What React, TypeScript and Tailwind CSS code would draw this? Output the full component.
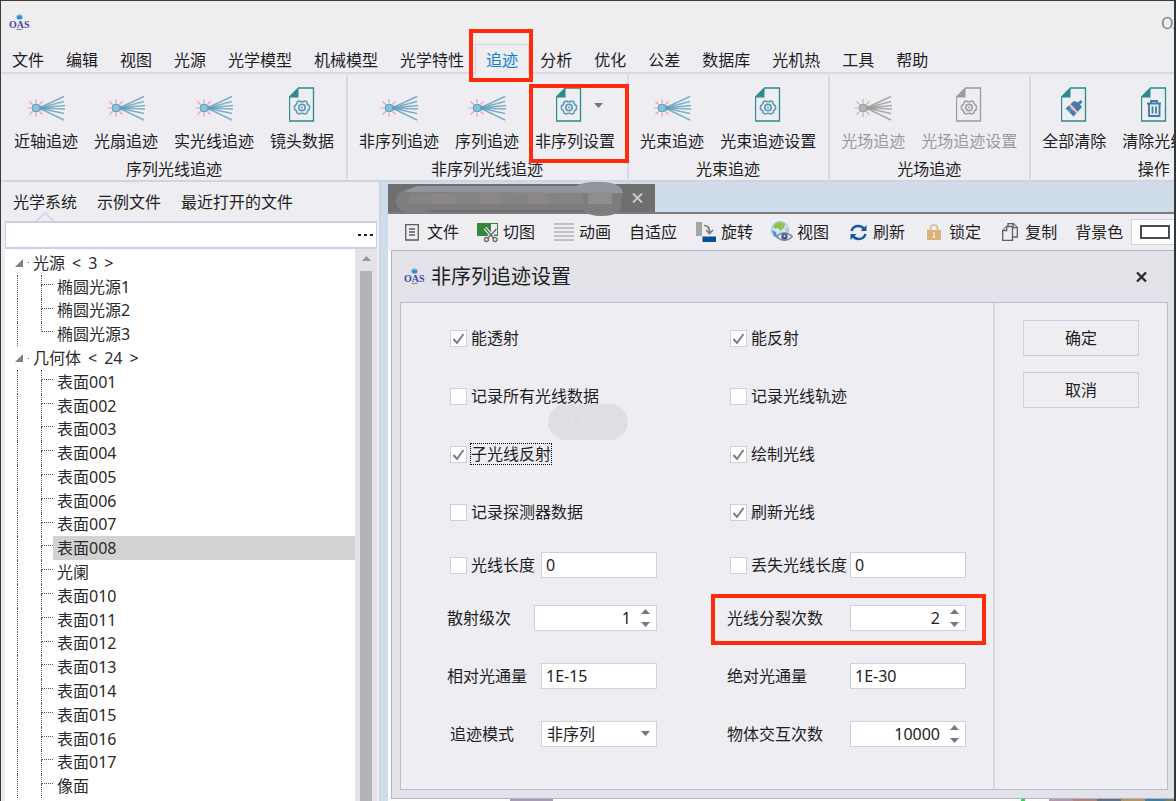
import { useState, type ReactNode } from 'react';

const menus = [
  '文件', '编辑', '视图', '光源', '光学模型', '机械模型', '光学特性', '追迹',
  '分析', '优化', '公差', '数据库', '光机热', '工具', '帮助',
];

const surfaces = [
  '表面001', '表面002', '表面003', '表面004', '表面005', '表面006', '表面007', '表面008', '光阑',
  '表面010', '表面011', '表面012', '表面013', '表面014', '表面015', '表面016', '表面017', '像面',
];

function OasLogo() {
  return (
    <svg className="h-[18px] w-[21px] shrink-0" viewBox="0 0 21 18" role="img" aria-label="OAS">
      <ellipse cx="10.5" cy="3" rx="3" ry="2.6" fill="#2f8fd0" />
      <path d="M8 2.2q2.5-2 5 0" stroke="#7fc4ea" strokeWidth="1" fill="none" />
      <path d="M7.5 15.5h6" stroke="#8d8d95" strokeWidth="1.2" />
      <text x="0" y="14" fontFamily="Liberation Serif, serif" fontWeight="700" fontSize="10" fill="#4a45a8">
        OAS
      </text>
    </svg>
  );
}

function RayIcon({ disabled = false }: { disabled?: boolean }) {
  const body = disabled ? '#b4b4b4' : '#86c1da';
  const edge = disabled ? '#9c9c9c' : '#5d9fbc';
  const spark = disabled ? '#b9b9b9' : '#f29cb0';
  const ray = disabled ? '#a9a9a9' : '#7fb0c6';
  return (
    <svg className="h-[36px] w-[40px]" viewBox="0 0 40 36" fill="none" aria-hidden>
      <path
        d="M10 12v4M10 26v4M1.500 21h4M3.500 14.500l3 3M3.500 27.500l3-3M16.500 14.500l-3 3M16.500 27.500l-3-3"
        stroke={spark}
        strokeWidth="1.2"
      />
      <path d="M13 21L38 9.500M13 21l25-6.500M13 21l26-2.500M13 21l26 1M13 21l25 5.500M13 21l25 12" stroke={ray} strokeWidth="1.500" />
      <path d="M12 18l11 3-11 3z" fill={edge} />
      <circle cx="10" cy="21" r="4" fill={body} stroke={edge} strokeWidth="1" />
    </svg>
  );
}

function DocIcon({ disabled = false, children }: { disabled?: boolean; children: ReactNode }) {
  const c = disabled ? '#9b9b9b' : '#2b8c8b';
  return (
    <svg className="h-[36px] w-[26px]" viewBox="0 0 26 36" fill="none" aria-hidden>
      <path d="M9.500 1h15v33h-24v-24z" stroke={c} strokeWidth="1.300" />
      <path d="M9.500 1v9.500h-9z" fill={c} />
      {children}
    </svg>
  );
}

function GearDoc({ disabled = false }: { disabled?: boolean }) {
  const c = disabled ? '#a2a2a2' : '#5b9cb9';
  return (
    <DocIcon disabled={disabled}>
      <path
        d="M10 14q3 1.500 6 0l1.500.5q.5 3 3 4.500v3q-2.500 1.500-3 4.500l-1.500.5q-3-1.500-6 0l-1.500-.5q-.5-3-3-4.500v-3q2.500-1.500 3-4.500z"
        stroke={c}
        strokeWidth="1.600"
      />
      <circle cx="13" cy="20.500" r="3.200" stroke={c} strokeWidth="1.700" />
      <circle cx="13" cy="20.500" r="1" fill={c} />
    </DocIcon>
  );
}

function BrushDoc() {
  return (
    <DocIcon>
      <path d="M17 15.500l2.500-2.500 2 2-2.500 2.500 2 2.500-8.500 9.500-8-8 8.500-7.500z" fill="#3f7fa6" />
      <path d="M8.500 17.500l7.500 8" stroke="#f6b9c4" strokeWidth="2.500" />
      <path d="M6.500 22l3 3M9 20.500l3 3" stroke="#a9cde0" strokeWidth="0.800" />
    </DocIcon>
  );
}

function TrashDoc() {
  return (
    <DocIcon>
      <path d="M6 16.500h14M10 16v-2h6v2M8 17v12h10.500V17" stroke="#3f7fa6" strokeWidth="1.900" />
      <path d="M11.500 19.500v7M15 19.500v7" stroke="#3f7fa6" strokeWidth="1.800" />
    </DocIcon>
  );
}

function Caret({ className = '', up = false }: { className?: string; up?: boolean }) {
  return (
    <svg className={`h-[5px] w-[9px] ${className}`} viewBox="0 0 9 5" fill="currentColor" aria-hidden>
      <path d={up ? 'M0 5L4.500 0L9 5z' : 'M0 0h9L4.500 5z'} />
    </svg>
  );
}

function RibbonButton({ icon, label, disabled, children }: { icon: ReactNode; label: string; disabled?: boolean; children?: ReactNode }) {
  return (
    <button type="button" disabled={disabled} className="relative flex flex-col items-center disabled:text-[#9a9a9d]">
      <span className="flex h-[36px] items-center gap-3">{icon}</span>
      <span className="mt-2 leading-5">{label}</span>
      {children}
    </button>
  );
}

function RibbonGroup({ title, className = '', children }: { title: string; className?: string; children: ReactNode }) {
  return (
    <section className={`my-px flex shrink-0 flex-col border-r-2 border-[#d9d9e6] pr-3 pl-[11px] ${className}`}>
      <div className="flex gap-4 pt-3">{children}</div>
      <h2 className="mt-2 text-center leading-5">{title}</h2>
    </section>
  );
}

function ToolButton({ icon, label }: { icon?: ReactNode; label: string }) {
  return (
    <button type="button" className="flex shrink-0 items-center gap-1">
      {icon && <span className="flex w-[22px] justify-center">{icon}</span>}
      {label}
    </button>
  );
}

function FileIcon() {
  return (
    <svg className="h-[17px] w-[14px]" viewBox="0 0 14 17" fill="none" stroke="#5c5c5c" strokeWidth="1.300" aria-hidden>
      <path d="M.7.7h12.600v15.300H.7zM4 5h6M4 8h6M4 11h6" />
    </svg>
  );
}

function CropIcon() {
  return (
    <svg className="h-[22px] w-[22px]" viewBox="0 0 22 22" fill="none" aria-hidden>
      <path d="M0 2h21v13H0z" fill="#36893a" />
      <path d="M14 3h6v10.500h-6z" fill="#eeedf2" />
      <path d="M8 7l9 10.500M19.500 8l-9 9.500" stroke="#eeedf2" strokeWidth="3.500" />
      <path d="M8 7l9 10.500M19.500 8l-9 9.500" stroke="#6f6f6f" strokeWidth="1.600" />
      <circle cx="9.500" cy="18.500" r="2" stroke="#6f6f6f" strokeWidth="1.400" />
      <circle cx="18" cy="18.500" r="2" stroke="#6f6f6f" strokeWidth="1.400" />
    </svg>
  );
}

function LinesIcon() {
  return (
    <svg className="h-[18px] w-[20px]" viewBox="0 0 20 18" stroke="#b2b2b5" strokeWidth="1.500" aria-hidden>
      <path d="M0 1h20M0 5h20M0 9h20M0 13h20M0 17h20" />
    </svg>
  );
}

function RotateIcon() {
  return (
    <svg className="h-[20px] w-[20px]" viewBox="0 0 20 20" fill="none" aria-hidden>
      <path d="M0 0h6v14H0z" fill="#a6a6a8" />
      <path d="M6.500 14.500h13.500v5.500H6.500z" fill="#06509b" />
      <path d="M8 3.500q5.500 0 5.500 6.500M10 8l3.500 3.500L17 8" stroke="#7b7b7b" strokeWidth="1.700" />
    </svg>
  );
}

function GlobeIcon() {
  return (
    <svg className="h-[22px] w-[22px]" viewBox="0 0 22 22" fill="none" aria-hidden>
      <circle cx="9" cy="9" r="8.500" fill="#cfe6f3" stroke="#8eb0c4" strokeWidth="0.800" />
      <path d="M5 2q5-2 9 1l-1 4-4 3-2-3-3 1-2-2z" fill="#8fc15b" />
      <path d="M1 9l4 2 1 5-3-1z" fill="#4f93c9" />
      <path d="M14 6l3 3-2 2z" fill="#a9cf6f" />
      <path d="M5.500 15.500q7.500-7 16 0-8 7.500-16 0z" fill="#e9eef6" stroke="#7382a8" strokeWidth="1.300" />
      <circle cx="13.500" cy="15.500" r="3.200" fill="#4a5c8a" />
      <circle cx="13.500" cy="15" r="1" fill="#dfe7f5" />
    </svg>
  );
}

function RefreshIcon() {
  return (
    <svg className="h-[17px] w-[17px]" viewBox="0 0 17 17" fill="none" stroke="#17599f" strokeWidth="2.400" aria-hidden>
      <path d="M1.500 7q1.500-5 7-5 3.500 0 5.500 3M15.500 10q-1.500 5-7 5-3.500 0-5.500-3" />
      <path d="M16.500 1v6h-6zM.5 16v-6h6z" fill="#17599f" stroke="none" />
    </svg>
  );
}

function LockIcon() {
  return (
    <svg className="h-[16px] w-[14px]" viewBox="0 0 14 16" fill="none" aria-hidden>
      <path d="M3.500 7V4.500q0-3.500 3.500-3.500t3.500 3.500V7" stroke="#dcb98a" strokeWidth="1.700" />
      <path d="M0 6h14v10H0z" fill="#ddb27a" />
      <path d="M7 8.500v1.500M7 11v3" stroke="#fbf3e4" strokeWidth="1.800" />
    </svg>
  );
}

function CopyIcon() {
  return (
    <svg className="h-[18px] w-[16px]" viewBox="0 0 16 18" stroke="#5f5f5f" strokeWidth="1.300" fill="#eeedf2" aria-hidden>
      <path d="M6 .7h5.500L15.300 4.500V14H6z" />
      <path d="M11 .7v4h4" />
      <path d="M.7 7.500l4-4H10.500v13.800H.7z" />
      <path d="M4.700 3.500v4h-4" />
    </svg>
  );
}

// tree branch: outer dotted rail, inner dotted rail, short dotted stub to the label
function Leaf({ label, last, selected, onSelect }: { label: string; last?: boolean; selected: boolean; onSelect: () => void }) {
  return (
    <li className="flex min-h-0 flex-1">
      <span className="ml-3 w-6 border-l border-dotted border-[#555]" />
      <span className="flex w-3 flex-col">
        <span className="h-[10px] border-b border-l border-dotted border-[#555]" />
        <span className={`flex-1 ${last ? '' : 'border-l border-dotted border-[#555]'}`} />
      </span>
      <button
        type="button"
        onClick={onSelect}
        className={`flex flex-1 items-center pl-1 text-left ${selected ? 'bg-[#d2d2d2]' : ''}`}
      >
        {label}
      </button>
    </li>
  );
}

function Branch({ label, count }: { label: string; count: number }) {
  return (
    <li className="flex min-h-0 flex-1 items-center">
      <svg className="ml-[10px] h-2 w-2" viewBox="0 0 8 8" fill="#808080" aria-hidden>
        <path d="M8 0v8H0z" />
      </svg>
      <span className="mr-1 ml-[5px] h-px w-px bg-[#555]" />
      <span className="flex gap-[7px]">
        <span>{label}</span>
        <span>&lt;</span>
        <span>{count}</span>
        <span>&gt;</span>
      </span>
    </li>
  );
}

function Check({ label, checked = false, focused = false }: { label: string; checked?: boolean; focused?: boolean }) {
  return (
    <label className="flex h-[26px] items-center gap-1">
      <span className="relative flex">
        <input
          type="checkbox"
          defaultChecked={checked}
          className="peer h-[17px] w-[17px] appearance-none border border-[#cfcfdf] bg-white"
        />
        <svg className="pointer-events-none absolute inset-0 hidden h-[17px] w-[17px] peer-checked:block" viewBox="0 0 17 17" fill="none" aria-hidden>
          <path d="M3.500 9l3.500 4 6.500-9" stroke="#7d7d80" strokeWidth="2" />
        </svg>
      </span>
      <span className={`leading-5 ${focused ? 'outline-1 outline-dotted outline-black' : ''}`}>{label}</span>
    </label>
  );
}

const box = 'h-[26px] border border-[#d0d1e0] bg-white leading-5 outline-none';

function TextRow({ id, label, value, check }: { id: string; label: string; value: string; check?: boolean }) {
  return (
    <div className="flex h-[26px] items-center justify-between">
      {check ? <div className="pl-[3px]"><Check label={label} /></div> : <label htmlFor={id}>{label}</label>}
      <input id={id} aria-label={label} defaultValue={value} className={`${box} w-[116px] px-1`} />
    </div>
  );
}

function SpinRow({ id, label, value, wide, children }: { id: string; label: string; value: number; wide?: boolean; children?: ReactNode }) {
  const [n, setN] = useState(value);
  return (
    <div className="relative flex h-[26px] items-center justify-between">
      <label htmlFor={id}>{label}</label>
      <div className={`${box} flex items-center ${wide ? 'w-[123px]' : 'w-[116px]'}`}>
        <input
          id={id}
          value={n}
          onChange={(e) => setN(Number(e.target.value) || 0)}
          className="min-w-0 flex-1 text-right outline-none"
        />
        <span className="flex w-[25px] flex-col items-center gap-2 pl-1 text-[#77777a]">
          <button type="button" aria-label="增加" onClick={() => setN(n + 1)} className="flex">
            <Caret up />
          </button>
          <button type="button" aria-label="减少" onClick={() => setN(n - 1)} className="flex">
            <Caret />
          </button>
        </span>
      </div>
      {children}
    </div>
  );
}

export default function App() {
  const [menu, setMenu] = useState('追迹');
  const [node, setNode] = useState('表面008');

  return (
    <div className="flex h-screen flex-col overflow-hidden border-t border-r-2 border-l border-[#3a3a3c] border-r-[#333638] bg-[#eeedf2] font-['Noto_Sans','Noto_Sans_CJK_SC',sans-serif] text-[16px] leading-5 whitespace-nowrap text-[#1e1e1e]">
      <header className="flex h-[43px] shrink-0 items-center justify-between bg-[#eeeeee] pl-2">
        <OasLogo />
        <span className="w-[13px] overflow-hidden text-[#808488]">OAS</span>
      </header>

      <nav className="flex h-[30px] shrink-0 border-b-2 border-[#d9d8e6]">
        {menus.map((m) => (
          <button
            key={m}
            type="button"
            onClick={() => setMenu(m)}
            className={`relative shrink-0 border-x border-t px-[10px] pt-[2px] ${
              m === menu ? '-mb-[2px] border-[#d3d3e2] bg-[#eeedf2] pb-[2px] text-[#1080d0]' : 'border-transparent'
            }`}
          >
            {m}
            {m === '追迹' && (
              <span className="pointer-events-none absolute -top-4 -right-[5px] -bottom-2 -left-[7px] z-10 border-4 border-[#ff2a0a]" />
            )}
          </button>
        ))}
      </nav>

      <div className="flex h-[108px] shrink-0 overflow-x-clip border-b-2 border-[#d3d3e0] pl-[2px]">
        <RibbonGroup title="序列光线追迹">
          <RibbonButton icon={<RayIcon />} label="近轴追迹" />
          <RibbonButton icon={<RayIcon />} label="光扇追迹" />
          <RibbonButton icon={<RayIcon />} label="实光线追迹" />
          <RibbonButton icon={<GearDoc />} label="镜头数据" />
        </RibbonGroup>
        <RibbonGroup title="非序列光线追迹">
          <RibbonButton icon={<RayIcon />} label="非序列追迹" />
          <RibbonButton icon={<RayIcon />} label="序列追迹" />
          <RibbonButton icon={<><GearDoc /><Caret className="-mr-2 text-[#77777a]" /></>} label="非序列设置">
            <span className="pointer-events-none absolute -top-[3px] -right-[14px] -bottom-3 -left-[6px] z-10 border-4 border-[#ff2a0a]" />
          </RibbonButton>
        </RibbonGroup>
        <RibbonGroup title="光束追迹">
          <RibbonButton icon={<RayIcon />} label="光束追迹" />
          <RibbonButton icon={<GearDoc />} label="光束追迹设置" />
        </RibbonGroup>
        <RibbonGroup title="光场追迹">
          <RibbonButton disabled icon={<RayIcon disabled />} label="光场追迹" />
          <RibbonButton disabled icon={<GearDoc disabled />} label="光场追迹设置" />
        </RibbonGroup>
        <RibbonGroup title="操作" className="w-[248px]">
          <RibbonButton icon={<BrushDoc />} label="全部清除" />
          <RibbonButton icon={<TrashDoc />} label="清除光线" />
        </RibbonGroup>
      </div>

      <div className="flex min-h-0 flex-1 bg-[#cfdcec]">
        <aside className="flex w-[380px] shrink-0 flex-col border-r-2 border-[#d3d3e2] bg-[#eeedf2] pr-[2px] pl-1">
          <div className="flex h-[39px] items-center gap-5 pl-2">
            <button type="button" className="relative flex h-full items-center">
              光学系统
              <svg className="absolute bottom-0 left-1/2 h-[9px] w-[18px] -translate-x-1/2" viewBox="0 0 18 9" fill="#eeedf2" stroke="#d0d1e2" strokeWidth="1.500" aria-hidden>
                <path d="M.5 9L9 .8 17.500 9" />
              </svg>
            </button>
            <button type="button">示例文件</button>
            <button type="button">最近打开的文件</button>
          </div>
          <div className="flex h-[28px] items-center border-y-2 border-r border-l border-[#cdd0e2] bg-white">
            <input aria-label="搜索" className="min-w-0 flex-1 px-2 outline-none" />
            <button type="button" aria-label="更多" className="flex gap-[3px] pr-[3px]">
              <span className="h-[2px] w-[3px] bg-[#222]" />
              <span className="h-[2px] w-[3px] bg-[#222]" />
              <span className="h-[2px] w-[3px] bg-[#222]" />
            </button>
          </div>
          <div className="flex min-h-0 flex-1">
            <ul className="flex flex-1 flex-col bg-white pt-[2px] pb-[3px] text-[#2a2a2a]">
              <Branch label="光源" count={3} />
              {['椭圆光源1', '椭圆光源2', '椭圆光源3'].map((s, i) => (
                <Leaf key={s} label={s} last={i === 2} selected={s === node} onSelect={() => setNode(s)} />
              ))}
              <Branch label="几何体" count={24} />
              {surfaces.map((s) => (
                <Leaf key={s} label={s} selected={s === node} onSelect={() => setNode(s)} />
              ))}
            </ul>
            <div className="flex w-[22px] flex-col items-center bg-[#e3e2e8] pt-[7px]">
              <Caret up className="text-[#98989b]" />
              <span className="mt-[10px] w-3 flex-1 bg-[#b4b4b6]" />
            </div>
          </div>
        </aside>

        <main className="flex min-w-0 flex-1 flex-col pl-[7px]">
          <div className="flex h-[32px] shrink-0 items-end border-b-2 border-[#7b7b7b]">
            <div className="relative flex h-[28px] w-[267px] items-center justify-end bg-[#6f6f6f] pr-3">
              <svg className="absolute -top-[3px] left-[6px] h-[36px] w-[230px]" viewBox="0 0 230 36" aria-hidden>
                <path d="M2 18Q2 10 14 8L24 5H182Q190 1 204 1Q228 1 229 14Q226 18 228 24Q226 35 208 35Q194 35 189 29H38Q26 33 14 32Q1 30 2 18z" fill="#7d7d7e" />
                <path d="M10 11Q14 8 24 5H182Q190 1 204 1Q228 1 229 12z" fill="#92959b" />
                <path d="M15 12h174v11H15z" fill="#848484" />
                <path d="M39 12h22v11H39zM85 12h22v11H85zM135 12h20v11h-20z" fill="#8a8786" />
                <path d="M194 12h24v11h-24z" fill="#8f8e8d" />
              </svg>
              <button type="button" aria-label="关闭标签">
                <svg className="h-[10px] w-[11px]" viewBox="0 0 11 10" stroke="#c9c9c9" strokeWidth="2" aria-hidden>
                  <path d="M1 .5l9 9M10 .5l-9 9" />
                </svg>
              </button>
            </div>
          </div>

          <div className="flex h-[36px] shrink-0 items-center gap-[18px] overflow-hidden bg-[#eeedf2] pl-[13px]">
            <ToolButton icon={<FileIcon />} label="文件" />
            <ToolButton icon={<CropIcon />} label="切图" />
            <ToolButton icon={<LinesIcon />} label="动画" />
            <ToolButton label="自适应" />
            <ToolButton icon={<RotateIcon />} label="旋转" />
            <ToolButton icon={<GlobeIcon />} label="视图" />
            <ToolButton icon={<RefreshIcon />} label="刷新" />
            <ToolButton icon={<LockIcon />} label="锁定" />
            <ToolButton icon={<CopyIcon />} label="复制" />
            <div className="flex flex-1 items-center gap-2">
              背景色
              <button type="button" aria-label="背景色" className="flex h-[26px] flex-1 items-center border border-r-0 border-[#d0d1e0] bg-white pl-2">
                <span className="h-[14px] w-[30px] border-2 border-[#4c4c4c]" />
              </button>
            </div>
          </div>

          <div className="flex min-h-0 flex-1 flex-col bg-white pl-[3px]">
            <div role="dialog" aria-label="非序列追迹设置" className="flex min-h-0 flex-1 flex-col border border-r-0 border-[#b0b3cc] bg-[#e3e2e8] pr-[6px] pb-2 pl-2">
              <div className="flex h-[51px] shrink-0 items-center gap-[6px] pr-[21px] pl-1">
                <OasLogo />
                <h1 className="flex-1 text-[20px] leading-6">非序列追迹设置</h1>
                <button type="button" aria-label="关闭">
                  <svg className="h-[10px] w-[11px]" viewBox="0 0 11 10" stroke="#2c2c2c" strokeWidth="2.300" aria-hidden>
                    <path d="M1 .5l9 9M10 .5l-9 9" />
                  </svg>
                </button>
              </div>

              <form className="flex min-h-0 flex-1 border border-[#b9bdd3] bg-[#eeedf2]" onSubmit={(e) => e.preventDefault()}>
                <div className="flex flex-1 gap-[70px] pt-[22px] pl-[46px]">
                  <div className="flex w-[210px] flex-col gap-[27px]">
                    <div className="flex flex-col gap-8 pl-[3px]">
                      <Check label="能透射" checked />
                      <Check label="记录所有光线数据" />
                      <Check label="子光线反射" checked focused />
                      <Check label="记录探测器数据" />
                    </div>
                    <TextRow id="len" label="光线长度" value="0" check />
                    <div className="flex flex-col gap-8">
                      <SpinRow id="scatter" label="散射级次" value={1} wide />
                      <TextRow id="rel" label="相对光通量" value="1E-15" />
                      <div className="flex h-[26px] items-center justify-between">
                        <label htmlFor="mode" className="pl-[3px]">追迹模式</label>
                        <div className="relative flex">
                          <select id="mode" className={`${box} w-[116px] appearance-none px-[5px]`}>
                            <option>非序列</option>
                          </select>
                          <Caret className="pointer-events-none absolute top-[10px] right-[7px] text-[#77777a]" />
                        </div>
                      </div>
                    </div>
                  </div>

                  <div className="flex w-[239px] flex-col gap-[27px]">
                    <div className="flex flex-col gap-8 pl-[3px]">
                      <Check label="能反射" checked />
                      <Check label="记录光线轨迹" />
                      <Check label="绘制光线" checked />
                      <Check label="刷新光线" checked />
                    </div>
                    <TextRow id="lost" label="丢失光线长度" value="0" check />
                    <div className="flex flex-col gap-8">
                      <SpinRow id="split" label="光线分裂次数" value={2}>
                        <span className="pointer-events-none absolute -top-[11px] -right-5 -bottom-[14px] -left-4 border-4 border-[#ff2a0a]" />
                      </SpinRow>
                      <TextRow id="abs" label="绝对光通量" value="1E-30" />
                      <SpinRow id="hits" label="物体交互次数" value={10000} />
                    </div>
                  </div>
                </div>

                <div className="flex w-[174px] flex-col items-center gap-4 border-l-2 border-[#d9d9e6] pt-[17px]">
                  <button type="submit" className="h-[36px] w-[116px] border border-[#cdd0e0]">确定</button>
                  <button type="button" className="h-[36px] w-[116px] border border-[#cdd0e0]">取消</button>
                </div>
              </form>
            </div>
            {/* sliver of the 3D view left visible under the dialog */}
            <div className="flex h-[2px] shrink-0">
              <span className="ml-[119px] w-[43px] bg-[#a99bb5]" />
              <span className="ml-[468px] w-1 bg-[#22e03a]" />
              <span className="ml-6 w-6 bg-[#b797ae]" />
              <span className="w-6 bg-[#b08478]" />
              <span className="w-6 bg-[#5f7186]" />
              <span className="w-6 bg-[#b59565]" />
              <span className="w-5 bg-[#3f7fa0]" />
              <span className="flex-1 bg-[#7b8060]" />
            </div>
          </div>
        </main>
      </div>

      <div className="pointer-events-none fixed top-[404px] left-1/2 flex h-9 w-20 -translate-x-1/2 items-center justify-center rounded-full bg-[#dfdee3] font-semibold text-[#e3e2e7]">
        132%
      </div>
    </div>
  );
}
